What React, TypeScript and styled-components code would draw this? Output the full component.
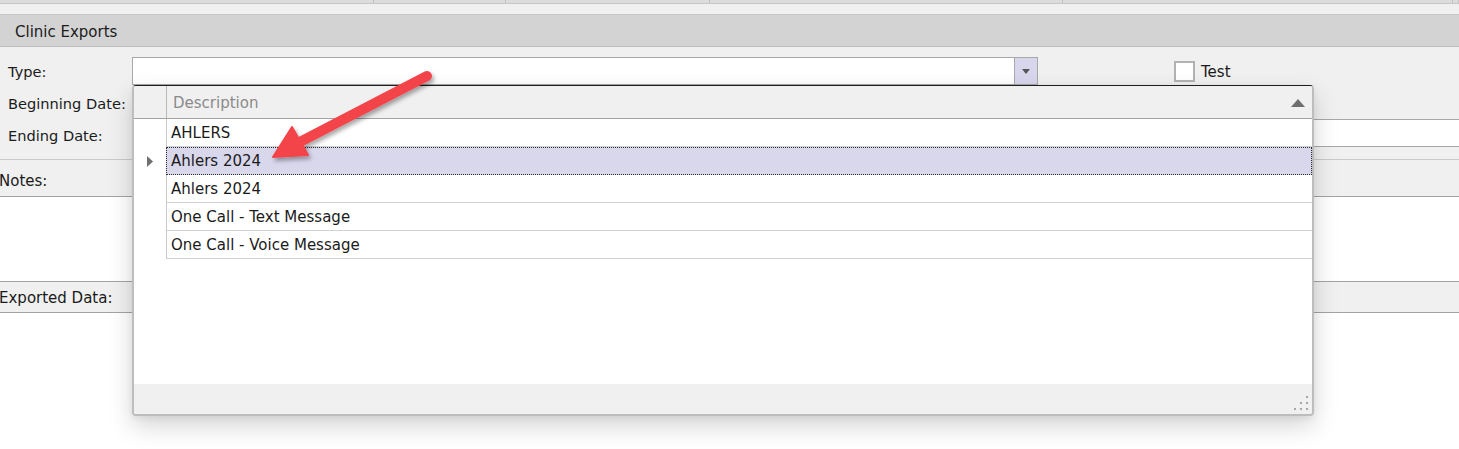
import React from "react";
import styled, { createGlobalStyle } from "styled-components";

const GlobalStyle = createGlobalStyle`
  html, body {
    margin: 0;
    padding: 0;
    background: #ffffff;
  }
  body {
    font-family: "DejaVu Sans", Tahoma, sans-serif;
    font-size: 15px;
    color: #1b1b1b;
    overflow: hidden;
  }
`;

const stripColumns = [374, 132, 204, 353, 390, 6];

const rows = [
  "AHLERS",
  "Ahlers 2024",
  "Ahlers 2024",
  "One Call - Text Message",
  "One Call - Voice Message",
];

const SELECTED = 1;

const App: React.FC = () => {
  return (
    <>
      <GlobalStyle />
      <Page>
        <TopStrip>
          {stripColumns.map((w, i) => (
            <StripCell key={i} width={w} />
          ))}
        </TopStrip>
        <Spacer />
        <SectionHeader>Clinic Exports</SectionHeader>

        <Form>
          <FieldRow>
            <Label shift={1}>Type:</Label>
            <ComboBox>
              <ComboText />
              <ComboButton>
                <svg width="8" height="5" viewBox="0 0 8 5">
                  <polygon points="0,0 8,0 4,5" fill="#555" />
                </svg>
              </ComboButton>
            </ComboBox>
            <CheckWrap>
              <CheckBox />
              <CheckText>Test</CheckText>
            </CheckWrap>
          </FieldRow>
          <FieldRow>
            <Label shift={3}>Beginning Date:</Label>
            <TextBox width={300} />
          </FieldRow>
          <FieldRow>
            <Label shift={5}>Ending Date:</Label>
            <TextBox grow />
          </FieldRow>
        </Form>

        <LabelBar height={37} shift={5}>Notes:</LabelBar>
        <NotesArea />
        <LabelBar height={31} shift={1}>Exported Data:</LabelBar>

        <Popup>
          <GridHeader>
            <HeaderIndicator />
            <HeaderCell>
              <span>Description</span>
              <svg width="14" height="8" viewBox="0 0 14 8">
                <polygon points="7,0 14,8 0,8" fill="#6f6f6f" />
              </svg>
            </HeaderCell>
          </GridHeader>
          {rows.map((text, i) => (
            <GridRow key={i}>
              <RowIndicator>
                {i === SELECTED && (
                  <svg width="6" height="11" viewBox="0 0 6 11">
                    <polygon points="0,0 6,5.5 0,11" fill="#707070" />
                  </svg>
                )}
              </RowIndicator>
              <Cell selected={i === SELECTED}>{text}</Cell>
            </GridRow>
          ))}
          <EmptyArea />
          <PopupFooter>
            <svg width="14" height="14" viewBox="0 0 14 14">
              {[
                [12, 0],
                [6, 6],
                [12, 6],
                [0, 12],
                [6, 12],
                [12, 12],
              ].map(([x, y], i) => (
                <rect key={i} x={x} y={y} width="2" height="2" fill="#a6a6a6" />
              ))}
            </svg>
          </PopupFooter>
        </Popup>

        <ArrowLayer viewBox="0 0 1459 449" width="1459" height="449">
          <defs>
            <filter id="arrowShadow" x="-20%" y="-20%" width="140%" height="140%">
              <feDropShadow dx="2" dy="3" stdDeviation="2" floodColor="#000" floodOpacity="0.35" />
            </filter>
          </defs>
          <g filter="url(#arrowShadow)" fill="#f3444a" stroke="#f3444a">
            <line x1="427" y1="76" x2="298" y2="143" strokeWidth="10" strokeLinecap="round" />
            <polygon points="273,157 292,127 308,155" strokeWidth="2" strokeLinejoin="round" />
          </g>
        </ArrowLayer>
      </Page>
    </>
  );
};

export default App;

const Page = styled.div`
  position: relative;
  width: 1459px;
  height: 449px;
  overflow: hidden;
  background: #ffffff;
`;

const TopStrip = styled.div`
  display: flex;
  height: 3px;
  background: #dcdcdc;
  border-bottom: 1px solid #c6c6c6;
`;

const StripCell = styled.div<{ width: number }>`
  flex: none;
  width: ${({ width }) => `${width}px`};
  box-sizing: border-box;
  border-right: 1px solid #c2c2c2;
`;

const Spacer = styled.div`
  height: 10px;
  background: #f0f0f0;
  border-bottom: 1px solid #c6c6c6;
`;

const SectionHeader = styled.div`
  height: 32px;
  box-sizing: border-box;
  display: flex;
  align-items: center;
  padding: 2px 0 0 15px;
  background: #d3d3d3;
  border-bottom: 1px solid #bdbdbd;
`;

const Form = styled.div`
  display: flex;
  flex-direction: column;
  gap: 3px;
  padding: 10px 0 12px;
  background: #f0f0f0;
  border-bottom: 1px solid #cacaca;
`;

const FieldRow = styled.div`
  display: flex;
  align-items: center;
  height: 28px;
`;

const Label = styled.div<{ shift: number }>`
  flex: none;
  width: 132px;
  box-sizing: border-box;
  padding: ${({ shift }) => `${shift}px 0 0 8px`};
  font-size: 14.6px;
  white-space: nowrap;
`;

const TextBox = styled.div<{ width?: number; grow?: boolean }>`
  height: 28px;
  box-sizing: border-box;
  background: #ffffff;
  border: 1px solid #a8a8a8;
  ${({ width }) => (width ? `width: ${width}px;` : "")}
  ${({ grow }) => (grow ? "flex: 1; border-right: none;" : "flex: none;")}
`;

const ComboBox = styled.div`
  flex: none;
  display: flex;
  width: 906px;
  height: 28px;
  box-sizing: border-box;
  border: 1px solid #a8a8a8;
  background: #ffffff;
`;

const ComboText = styled.div`
  flex: 1;
`;

const ComboButton = styled.div`
  width: 22px;
  display: flex;
  align-items: center;
  justify-content: center;
  background: #d8d6ec;
  border-left: 1px solid #a8a8a8;
`;

const CheckWrap = styled.div`
  display: flex;
  align-items: center;
  gap: 6px;
  margin-left: 136px;
`;

const CheckBox = styled.div`
  width: 21px;
  height: 21px;
  box-sizing: border-box;
  background: #ffffff;
  border: 2px solid #b2b2b2;
`;

const CheckText = styled.span`
  padding-top: 2px;
`;

const LabelBar = styled.div<{ height: number; shift: number }>`
  height: ${({ height }) => `${height}px`};
  box-sizing: border-box;
  display: flex;
  align-items: center;
  margin-left: -1px;
  padding-top: ${({ shift }) => `${shift}px`};
  background: #f0f0f0;
  border-bottom: 1px solid #a3a3a3;
`;

const NotesArea = styled.div`
  height: 84px;
  background: #ffffff;
  border-bottom: 1px solid #a3a3a3;
`;

const Popup = styled.div`
  position: absolute;
  left: 132px;
  top: 85px;
  width: 1182px;
  height: 331px;
  box-sizing: border-box;
  display: flex;
  flex-direction: column;
  overflow: hidden;
  background: #ffffff;
  border: 2px solid #bdbdbd;
  border-top: 1px solid #1e1e1e;
  border-radius: 4px;
  box-shadow: 0 10px 24px rgba(0, 0, 0, 0.17), 0 2px 6px rgba(0, 0, 0, 0.06);
`;

const GridHeader = styled.div`
  flex: none;
  display: flex;
  height: 33px;
  box-sizing: border-box;
  background: #f0f0f0;
  border-bottom: 1px solid #a3a3a3;
`;

const HeaderIndicator = styled.div`
  width: 33px;
  box-sizing: border-box;
  border-right: 1px solid #b8b8b8;
`;

const HeaderCell = styled.div`
  flex: 1;
  display: flex;
  align-items: center;
  justify-content: space-between;
  padding: 1px 7px 0 6px;
  color: #8a8a8a;
`;

const GridRow = styled.div`
  flex: none;
  display: flex;
  height: 28px;
`;

const RowIndicator = styled.div`
  width: 32px;
  display: flex;
  align-items: center;
  justify-content: center;
`;

const Cell = styled.div<{ selected?: boolean }>`
  flex: 1;
  display: flex;
  align-items: center;
  box-sizing: border-box;
  padding-left: 4px;
  white-space: nowrap;
  border-left: 1px solid #c8c8c8;
  border-bottom: 1px solid #d2d2d2;
  ${({ selected }) =>
    selected
      ? `
    background: #d9d7ec;
    border: 1px dotted #2a2a2a;
  `
      : ""}
`;

const EmptyArea = styled.div`
  flex: 1;
`;

const PopupFooter = styled.div`
  flex: none;
  height: 30px;
  box-sizing: border-box;
  display: flex;
  align-items: flex-end;
  justify-content: flex-end;
  padding: 0 4px 4px 0;
  background: #f0f0f0;
`;

const ArrowLayer = styled.svg`
  position: absolute;
  left: 0;
  top: 0;
  pointer-events: none;
`;
